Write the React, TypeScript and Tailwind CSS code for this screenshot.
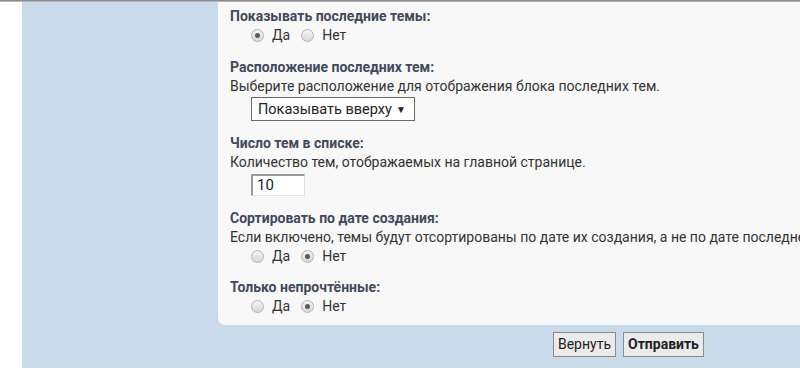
const font = { fontFamily: "Roboto, 'Noto Sans', sans-serif" };

const Radio = ({ on, label }: { on?: boolean; label: string }) => (
  <label className="flex items-center gap-[8px]">
    <span className="flex h-[13px] w-[13px] items-center justify-center rounded-full border border-[#b4b4b4] bg-gradient-to-b from-[#f4f4f4] to-[#d8d8d8]">
      {on && <span className="h-[5px] w-[5px] rounded-full bg-[#5a5a5a]" />}
    </span>
    <span>{label}</span>
  </label>
);

const YesNo = ({ yes }: { yes: boolean }) => (
  <div className="flex h-[19px] items-center gap-[11px] pl-[21px]">
    <Radio on={yes} label="Да" />
    <Radio on={!yes} label="Нет" />
  </div>
);

const Title = ({ children }: { children: string }) => (
  <h3 className="h-[19px] font-bold leading-[19px] text-[#3f4a5c]">{children}</h3>
);

export default function App() {
  return (
    <div className="h-[376px] w-[800px] overflow-hidden bg-white text-[14px] leading-[19px] text-[#333]" style={font}>
      <div className="h-[2px] bg-gradient-to-b from-[#7a7a7a] to-[#c8c8c8]" />
      <div className="ml-[22px] flex h-[366px] flex-col bg-[#c9daea]">
        <div className="ml-[196px] flex h-[323px] flex-col whitespace-nowrap rounded-bl-[7px] bg-[#f8f8f8] pl-[12px] pt-[5px]">
          <Title>Показывать последние темы:</Title>
          <YesNo yes />

          <div className="mt-[13px]">
            <Title>Расположение последних тем:</Title>
            <p>Выберите расположение для отображения блока последних тем.</p>
            <div className="ml-[21px] mt-[1px] flex h-[24px] w-[164px] items-center justify-between border border-[#6a6a6a] bg-white pl-[6px] pr-[8px] text-[14.5px] text-[#222]">
              <span>Показывать вверху</span>
              <span className="text-[10px]">▼</span>
            </div>
          </div>

          <div className="mt-[13px]">
            <Title>Число тем в списке:</Title>
            <p>Количество тем, отображаемых на главной странице.</p>
            <div className="ml-[21px] mt-[2px] flex h-[22px] w-[54px] items-center border-l-2 border-t-2 border-b border-r border-l-[#9a9a9a] border-t-[#9a9a9a] border-b-[#e2e2e2] border-r-[#e2e2e2] bg-white pl-[4px] text-[15px] text-[#222]">
              10
            </div>
          </div>

          <div className="mt-[13px]">
            <Title>Сортировать по дате создания:</Title>
            <p>Если включено, темы будут отсортированы по дате их создания, а не по дате последнего сообщения.</p>
            <YesNo yes={false} />
          </div>

          <div className="mt-[12px]">
            <Title>Только непрочтённые:</Title>
            <YesNo yes={false} />
          </div>
        </div>

        <div className="mt-[7px] flex gap-[7px] pl-[531px]">
          <button className="h-[25px] w-[63px] border border-[#8a8a8a] bg-[#ebebeb] text-[14px] text-[#222]">Вернуть</button>
          <button className="h-[25px] w-[81px] border border-[#8a8a8a] bg-[#ebebeb] text-[14px] font-bold text-[#222]">Отправить</button>
        </div>
      </div>
    </div>
  );
}
